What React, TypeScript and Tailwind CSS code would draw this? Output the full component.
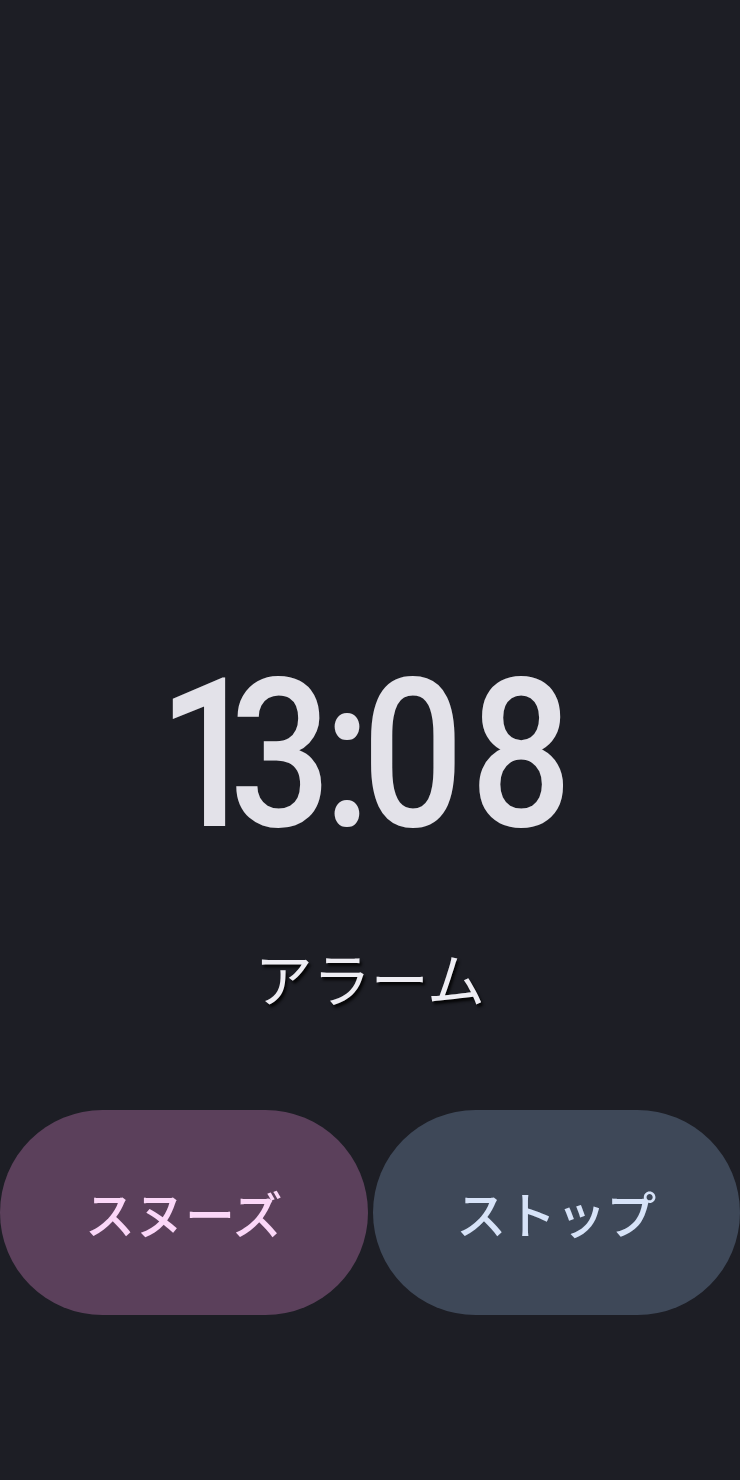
const digits = [
  { ch: "1", cls: "tracking-[-35px]" },
  { ch: "3", cls: "tracking-[-9px]" },
  { ch: ":", cls: "tracking-[-10px]" },
  { ch: "0", cls: "tracking-[7.5px]" },
  { ch: "8", cls: "tracking-normal" },
];

export default function App() {
  return (
    <div className="flex h-[1480px] w-[740px] flex-col bg-[#1d1e25] font-['Roboto','Noto_Sans_CJK_JP',sans-serif]">
      <div className="flex flex-1 flex-col justify-end">
        <div className="ml-[158px] flex origin-left scale-x-[0.86] text-[208px] font-medium leading-none text-[#e3e2e9]">
          {digits.map((d, i) => (
            <span key={i} className={d.cls}>
              {d.ch}
            </span>
          ))}
        </div>
        <div className="mt-[89px] self-center font-['Noto_Sans_CJK_JP',sans-serif] text-[58px] font-normal leading-none text-[#eeedf3] [text-shadow:2px_3px_3px_rgba(0,0,0,0.85)]">
          アラーム
        </div>
      </div>
      <div className="mt-[104px] mb-[165px] flex gap-[5px]">
        <button className="flex h-[205px] flex-1 items-center justify-center rounded-full bg-[#5b405b] font-['Noto_Sans_CJK_JP',sans-serif] text-[50px] font-medium text-[#fbd7f8]">
          スヌーズ
        </button>
        <button className="flex h-[205px] flex-1 items-center justify-center rounded-full bg-[#3e4858] font-['Noto_Sans_CJK_JP',sans-serif] text-[50px] font-medium text-[#d7e3f8]">
          ストップ
        </button>
      </div>
    </div>
  );
}
